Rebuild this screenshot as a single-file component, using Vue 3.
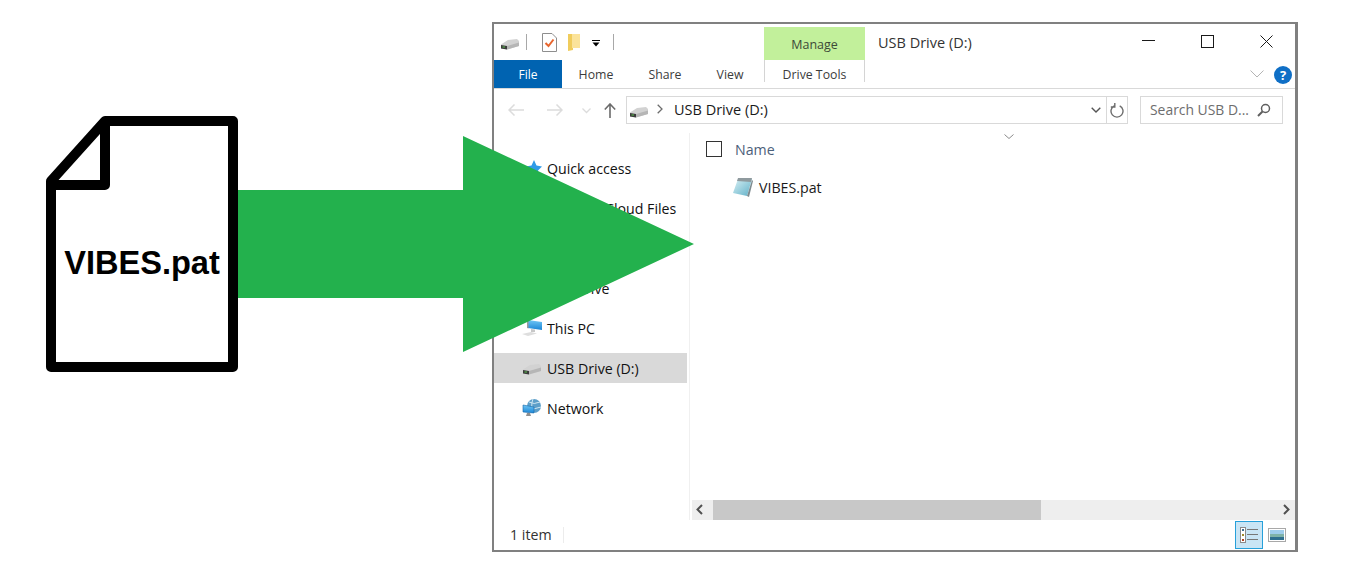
<script setup>
const tabs = [
  { label: 'Home', width: 68 },
  { label: 'Share', width: 70 },
  { label: 'View', width: 60 },
]
</script>

<template>
  <div class="stage">
    <svg class="defs" width="0" height="0" aria-hidden="true">
      <defs>
        <linearGradient id="screen" x1="0" y1="0" x2="0" y2="1">
          <stop offset="0" stop-color="#6fc6f5" />
          <stop offset="1" stop-color="#1b86d6" />
        </linearGradient>
        <linearGradient id="pad" x1="0" y1="0" x2="1" y2="1">
          <stop offset="0" stop-color="#d8f0f4" />
          <stop offset="1" stop-color="#5fb0c8" />
        </linearGradient>
        <symbol id="drive" viewBox="0 0 18 11">
          <polygon points="0,5.500 7,1 16,0 18,2 18,7 6,10.500 0,9.500" fill="#d2d2d2" />
          <polygon points="6,7 18,3.500 18,7 6,10.500" fill="#b6b6b6" />
          <polygon points="0,6 6,7 6,10.500 0,9.500" fill="#3c3c3c" />
          <rect x="1.500" y="7.500" width="2.500" height="1" fill="#58c04a" />
        </symbol>
      </defs>
    </svg>

    <svg class="doc-outline" viewBox="0 0 192 256" aria-hidden="true">
      <path d="M59 5H187V251H5V65ZM59 5V69H5" fill="#fff" stroke="#000" stroke-width="10" stroke-linejoin="round" />
    </svg>
    <div class="doc-label">VIBES.pat</div>

    <section class="window">
      <header class="titlebar">
        <svg class="qa-drive" width="18" height="11"><use href="#drive" /></svg>
        <span class="qa-sep first"></span>
        <svg class="qa-doc" width="15" height="19" viewBox="0 0 15 19">
          <path d="M.5.5H10L14.500 5V18.500H.5Z" fill="#fff" stroke="#8e8e8e" />
          <path d="M3.500 10L6.500 13L11.500 6.500" fill="none" stroke="#e8652d" stroke-width="2" />
        </svg>
        <svg class="qa-folder" width="13" height="18" viewBox="0 0 13 18">
          <path d="M0 1H5V17L0 18Z" fill="#f0cc5c" />
          <path d="M4 1H12V15H4Z" fill="#fbe39a" />
        </svg>
        <svg class="qa-more" width="8" height="7" viewBox="0 0 8 7">
          <rect x="0" y="0" width="8" height="1" fill="#000" />
          <polygon points="0.500,2.500 7.500,2.500 4,6.500" fill="#000" />
        </svg>
        <span class="qa-sep last"></span>
        <div class="manage">Manage</div>
        <div class="title">USB Drive (D:)</div>
        <svg class="win-ctl win-min" width="13" height="13" viewBox="0 0 13 13"><path d="M0 5.500H13" stroke="#1a1a1a" /></svg>
        <svg class="win-ctl win-max" width="13" height="13" viewBox="0 0 13 13"><rect x=".5" y=".5" width="12" height="12" fill="none" stroke="#1a1a1a" /></svg>
        <svg class="win-ctl win-close" width="13" height="13" viewBox="0 0 13 13"><path d="M.5.5L12.500 12.500M12.500.5L.5 12.500" stroke="#1a1a1a" /></svg>
      </header>

      <nav class="tabs">
        <div class="tab-file">File</div>
        <div v-for="tab in tabs" :key="tab.label" class="tab" :style="{ width: tab.width + 'px' }">{{ tab.label }}</div>
        <div class="tab-tools">Drive Tools</div>
        <svg class="ribbon-chevron" width="14" height="8" viewBox="0 0 14 8"><path d="M.5.500L7 7L13.500.500" fill="none" stroke="#b4b4b4" /></svg>
        <div class="help">?</div>
      </nav>

      <div class="addressrow">
        <svg class="nav-arrow" width="16" height="12" viewBox="0 0 16 12"><path d="M16 6H1M6.500.5L1 6L6.500 11.500" fill="none" stroke="#dcdcdc" stroke-width="1.500" /></svg>
        <svg class="nav-arrow fwd" width="16" height="12" viewBox="0 0 16 12"><path d="M0 6H15M9.500.5L15 6L9.500 11.500" fill="none" stroke="#dcdcdc" stroke-width="1.500" /></svg>
        <svg class="nav-drop" width="9" height="6" viewBox="0 0 9 6"><path d="M.5.500L4.500 4.500L8.500.500" fill="none" stroke="#dcdcdc" stroke-width="1.300" /></svg>
        <svg class="nav-up" width="12" height="15" viewBox="0 0 12 15"><path d="M6 15V1M.8 6.500L6 1L11.200 6.500" fill="none" stroke="#6b6b6b" stroke-width="1.600" /></svg>
        <div class="address">
          <svg class="addr-drive" width="18" height="11"><use href="#drive" /></svg>
          <svg class="addr-sep" width="6" height="10" viewBox="0 0 6 10"><path d="M.7.700L5 5L.7 9.300" fill="none" stroke="#6d6d6d" stroke-width="1.300" /></svg>
          <span class="addr-text">USB Drive (D:)</span>
          <svg class="addr-drop" width="10" height="6" viewBox="0 0 10 6"><path d="M.7.700L5 5L9.300.700" fill="none" stroke="#555" stroke-width="1.400" /></svg>
          <div class="addr-refresh">
            <svg width="14" height="15" viewBox="0 0 14 15"><path d="M9.700 2.800A6 6 0 1 1 4.300 2.800M4.800 0V4H.8" fill="none" stroke="#6d6d6d" stroke-width="1.400" /></svg>
          </div>
        </div>
        <div class="search">
          <span>Search USB D...</span>
          <svg width="14" height="14" viewBox="0 0 14 14"><circle cx="8.500" cy="5.500" r="4" fill="none" stroke="#5f5f5f" stroke-width="1.500" /><path d="M5.500 8.500L1 13" stroke="#5f5f5f" stroke-width="2" /></svg>
        </div>
      </div>

      <div class="body">
        <aside class="sidebar">
          <div class="row">
            <svg class="row-icon" width="20" height="18" viewBox="0 0 20 18"><polygon points="12,1 14.500,6.500 20,7.500 16,11.500 17,17 12,14.200 7,17 8,11.500 4,7.500 9.500,6.500" fill="#2f9be8" /></svg>
            <span>Quick access</span>
          </div>
          <div class="row"><span class="row-blank"></span><span>Creative Cloud Files</span></div>
          <div class="row"></div>
          <div class="row"><span class="row-blank"></span><span>OneDrive</span></div>
          <div class="row">
            <svg class="row-icon" width="20" height="18" viewBox="0 0 20 18">
              <polygon points="6,1 20,3 20,11 6,9" fill="url(#screen)" />
              <polygon points="5,.500 6.500,1 6.500,9.500 5,9" fill="#9a9a9a" />
              <polygon points="9,10 13,10.500 13,13 9,13" fill="#c8c8c8" />
              <polygon points="0,15 9,13 15,14.500 6,17" fill="#dedede" />
            </svg>
            <span>This PC</span>
          </div>
          <div class="row selected">
            <svg class="row-drive" width="18" height="11"><use href="#drive" /></svg>
            <span>USB Drive (D:)</span>
          </div>
          <div class="row">
            <svg class="row-icon" width="20" height="18" viewBox="0 0 20 18">
              <circle cx="12" cy="7" r="7" fill="#5d9fc9" />
              <path d="M7 3Q12 6 18 3M6 9Q12 11 19 8M11 0Q8 7 12 14" fill="none" stroke="#cfe7f2" stroke-width="1" />
              <polygon points="1,6 12,8 12,14 1,13" fill="url(#screen)" stroke="#1466a8" stroke-width=".600" />
              <polygon points="5,14 8,14 9,17 4,17" fill="#8f8f8f" />
            </svg>
            <span>Network</span>
          </div>
        </aside>

        <main class="main">
          <svg class="sort" width="10" height="5" viewBox="0 0 10 5"><path d="M.5.500L5 4.500L9.500.500" fill="none" stroke="#8a8a8a" /></svg>
          <div class="columns">
            <span class="checkbox"></span>
            <span class="col-name">Name</span>
          </div>
          <div class="file">
            <svg width="20" height="19" viewBox="0 0 20 19">
              <polygon points="5,1 19,1 14,18 0,15" fill="url(#pad)" />
              <polygon points="5,0 19,0 18,4 4,3" fill="#8f9a9e" />
              <polygon points="14,18 19,2 20,3 16,19" fill="#7d8b90" />
            </svg>
            <span>VIBES.pat</span>
          </div>
          <div class="spacer"></div>
          <div class="hscroll">
            <svg class="scroll-btn" width="21" height="20" viewBox="0 0 21 20"><path d="M10 5L5.500 9.500L10 14" fill="none" stroke="#505050" stroke-width="2" /></svg>
            <div class="thumb"></div>
            <div class="track"></div>
            <svg class="scroll-btn" width="21" height="20" viewBox="0 0 21 20"><path d="M10 5L14.500 9.500L10 14" fill="none" stroke="#505050" stroke-width="2" /></svg>
          </div>
        </main>
      </div>

      <footer class="status">
        <span class="count">1 item</span>
        <span class="status-sep"></span>
        <div class="view-active">
          <svg width="18" height="16" viewBox="0 0 18 16">
            <rect x=".5" y=".5" width="5" height="15" fill="#fff" stroke="#8a8a8a" />
            <rect x="2" y="2" width="2" height="2" fill="#3c6d8f" />
            <rect x="2" y="7" width="2" height="2" fill="#a08a2a" />
            <rect x="2" y="12" width="2" height="2" fill="#b0401f" />
            <path d="M7 2.500H18M7 7.500H18M7 12.500H18" stroke="#777" />
          </svg>
        </div>
        <svg class="view-large" width="18" height="14" viewBox="0 0 18 14">
          <rect x=".5" y=".5" width="17" height="13" fill="#fff" stroke="#a8a8a8" />
          <rect x="2" y="2" width="14" height="4" fill="#9fcdec" />
          <rect x="2" y="6" width="14" height="3" fill="#7fb2a8" />
          <rect x="2" y="9" width="14" height="3" fill="#2f6f8f" />
        </svg>
      </footer>
    </section>

    <svg class="arrow" viewBox="0 0 456 216" aria-hidden="true">
      <polygon points="0,54 225,54 225,0 456,108 225,216 225,162 0,162" fill="#23b14d" />
    </svg>
  </div>
</template>

<style>
html, body { margin: 0; background: #fff; }
</style>

<style scoped>
.stage {
  position: relative;
  width: 1354px;
  height: 582px;
  overflow: hidden;
  background: #fff;
  font-family: "Open Sans", "Noto Sans", sans-serif;
  color: #1a1a1a;
}
.defs { position: absolute; }
.doc-outline { position: absolute; left: 46px; top: 116px; width: 192px; height: 256px; }
.doc-label {
  position: absolute;
  left: 46px;
  top: 244px;
  width: 192px;
  text-align: center;
  font: bold 32.6px/38px "Liberation Sans", Arial, sans-serif;
  color: #000;
}
.arrow { position: absolute; left: 238px; top: 136px; width: 456px; height: 216px; }

.window {
  position: absolute;
  left: 492px;
  top: 22px;
  width: 801px;
  height: 526px;
  border: 2px solid #808080;
  border-right-width: 3px;
  background: #fff;
  display: flex;
  flex-direction: column;
}

.titlebar { height: 36px; display: flex; align-items: center; flex: none; }
.qa-drive { margin: 5px 0 0 7px; }
.qa-sep { width: 1px; height: 16px; background: #a8a8a8; }
.qa-sep.first { margin-left: 7px; }
.qa-doc { margin-left: 15px; }
.qa-folder { margin-left: 11px; }
.qa-more { margin-left: 11px; margin-top: 3px; }
.qa-sep.last { margin-left: 13px; }
.manage {
  margin-left: 150px;
  align-self: flex-end;
  width: 101px;
  height: 33px;
  line-height: 36px;
  text-align: center;
  background: #c2f09b;
  font-size: 12.5px;
  color: #3c4a38;
}
.title { margin-left: 13px; flex: 1; font-size: 14.5px; color: #333; }
.win-ctl { margin-bottom: 2px; }
.win-min { margin-right: 46px; }
.win-max { margin-right: 46px; }
.win-close { margin-right: 22px; }

.tabs {
  height: 28px;
  flex: none;
  display: flex;
  align-items: stretch;
  border-bottom: 1px solid #d9d9d9;
  font-size: 12.3px;
  line-height: 30px;
  color: #3c3c3c;
}
.tab-file { width: 68px; background: #0063b1; color: #fff; text-align: center; font-size: 12px; }
.tab { text-align: center; }
.tab-tools {
  margin-left: 4px;
  width: 99px;
  height: 22px;
  text-align: center;
  border-left: 1px solid #d4d4d4;
  border-right: 1px solid #d4d4d4;
}
.ribbon-chevron { align-self: center; margin-left: 385px; }
.help {
  width: 18px;
  height: 18px;
  margin: 2px 0 0 10px;
  align-self: center;
  border-radius: 50%;
  background: #0f6fc6;
  color: #fff;
  font: bold 13px/18px "Open Sans", sans-serif;
  text-align: center;
}

.addressrow { height: 41px; flex: none; display: flex; align-items: flex-start; padding-top: 7px; box-sizing: border-box; }
.nav-arrow { margin: 8px 0 0 14px; }
.nav-arrow.fwd { margin-left: 23px; }
.nav-drop { margin: 12px 0 0 19px; }
.nav-up { margin: 7px 0 0 13px; }
.address {
  margin-left: 10px;
  width: 502px;
  height: 28px;
  box-sizing: border-box;
  border: 1px solid #d9d9d9;
  display: flex;
  align-items: center;
}
.addr-drive { margin: 5px 0 0 3px; }
.addr-sep { margin-left: 9px; margin-top: -3px; }
.addr-text { margin: 0 0 2px 11px; flex: 1; font-size: 14.5px; }
.addr-drop { margin-right: 5px; }
.addr-refresh {
  width: 20px;
  height: 100%;
  border-left: 1px solid #d9d9d9;
  display: flex;
  align-items: center;
  justify-content: center;
}
.search {
  margin-left: 12px;
  width: 143px;
  height: 28px;
  box-sizing: border-box;
  border: 1px solid #d9d9d9;
  display: flex;
  align-items: center;
  justify-content: space-between;
  padding: 0 11px 0 9px;
  font-size: 13.9px;
  color: #6d6d6d;
}
.search span { margin-bottom: 2px; }

.body { flex: 1; display: flex; min-height: 0; }
.sidebar { width: 193px; flex: none; padding-top: 23px; box-sizing: border-box; font-size: 14.2px; }
.row { height: 30px; margin-bottom: 10px; display: flex; align-items: center; padding-left: 28px; color: #111; }
.row.selected { background: #d9d9d9; }
.row-icon { width: 20px; margin-right: 5px; flex: none; }
.row-drive { margin: 3px 6px 0 1px; flex: none; }
.row-blank { width: 25px; flex: none; }

.main {
  position: relative;
  flex: 1;
  margin-left: 2px;
  margin-top: 3px;
  border-left: 1px solid #f0f0f0;
  display: flex;
  flex-direction: column;
}
.sort { position: absolute; left: 314px; top: 1px; }
.columns { display: flex; align-items: center; margin: 8px 0 0 16px; height: 16px; }
.checkbox { width: 14px; height: 14px; border: 1px solid #333; }
.col-name { margin-left: 13px; font-size: 14.2px; color: #4c607a; }
.file { display: flex; align-items: center; margin: 20px 0 0 43px; height: 20px; font-size: 14.2px; }
.file span { margin-left: 6px; }
.spacer { flex: 1; }
.hscroll { height: 20px; margin-left: 2px; display: flex; background: #eeeeee; }
.scroll-btn { flex: none; }
.thumb { width: 328px; background: #c8c8c8; }
.track { flex: 1; }

.status { height: 30px; flex: none; display: flex; align-items: center; font-size: 14.2px; color: #333; }
.count { margin-left: 16px; width: 53px; margin-bottom: 2px; }
.status-sep { width: 1px; height: 16px; background: #ececec; }
.view-active {
  margin-left: 671px;
  width: 26px;
  height: 26px;
  border: 1px solid #26a0da;
  background: #c9e5f5;
  display: flex;
  align-items: center;
  justify-content: center;
}
.view-large { margin-left: 5px; }
</style>
